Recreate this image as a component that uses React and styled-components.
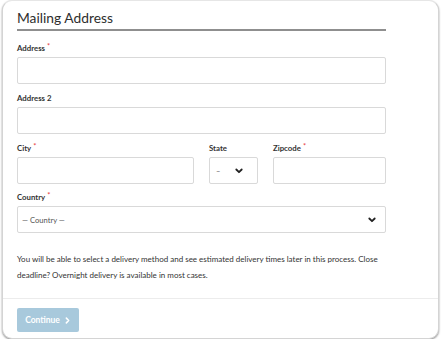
import React from "react";
import styled, { createGlobalStyle } from "styled-components";

const GlobalStyle = createGlobalStyle`
  html, body {
    margin: 0;
    padding: 0;
    background: #ffffff;
  }
  body {
    font-family: Lato, "Open Sans", "Liberation Sans", sans-serif;
    color: #333333;
  }
`;

const Chevron = ({ dir = "down", color = "#222", size = 8 }) => (
  <svg width={size} height={size} viewBox="0 0 8 8">
    <path
      d={dir === "down" ? "M1.3 2.5 L4 5.2 L6.7 2.5" : "M2.7 1.3 L5.3 4 L2.7 6.7"}
      fill="none"
      stroke={color}
      strokeWidth="1.8"
      strokeLinecap="round"
      strokeLinejoin="round"
    />
  </svg>
);

const App = () => {
  return (
    <>
      <GlobalStyle />
      <StyledCard>
        <StyledBody>
          <StyledTitle>Mailing Address</StyledTitle>

          <StyledField top="10px">
            <StyledLabel>
              Address<Req>*</Req>
            </StyledLabel>
            <StyledInput />
          </StyledField>

          <StyledField>
            <StyledLabel>Address 2</StyledLabel>
            <StyledInput />
          </StyledField>

          <StyledRow>
            <StyledField width="177px">
              <StyledLabel>
                City<Req>*</Req>
              </StyledLabel>
              <StyledInput />
            </StyledField>
            <StyledField width="49px">
              <StyledLabel>State</StyledLabel>
              <StyledSelect pad="0 14px 0 6px">
                <span>–</span>
                <Chevron />
              </StyledSelect>
            </StyledField>
            <StyledField width="113px">
              <StyledLabel>
                Zipcode<Req>*</Req>
              </StyledLabel>
              <StyledInput />
            </StyledField>
          </StyledRow>

          <StyledField top="8px">
            <StyledLabel>
              Country<Req>*</Req>
            </StyledLabel>
            <StyledSelect pad="0 9px 0 4px">
              <span>— Country —</span>
              <Chevron />
            </StyledSelect>
          </StyledField>

          <StyledNote>
            You will be able to select a delivery method and see estimated
            delivery times later in this process. Close deadline? Overnight
            delivery is available in most cases.
          </StyledNote>
        </StyledBody>

        <StyledFooter>
          <StyledButton>
            Continue <Chevron dir="right" color="#fff" size={7} />
          </StyledButton>
        </StyledFooter>
      </StyledCard>
    </>
  );
};

const StyledCard = styled.div`
  box-sizing: border-box;
  margin: 0 2px;
  width: 437px;
  height: 339px;
  border: 1px solid #d4d4d4;
  border-top-color: #e6e6e6;
  border-radius: 10px;
  box-shadow: 0 1px 2px rgba(0, 0, 0, 0.45);
  background: #fff;
  display: flex;
  flex-direction: column;
  overflow: hidden;
`;

const StyledBody = styled.div`
  width: 369px;
  padding: 8px 0 0 14px;
  display: flex;
  flex-direction: column;
`;

const StyledTitle = styled.h2`
  margin: 0 0 2px;
  font-size: 13.8px;
  font-weight: 400;
  color: #2e2e2e;
  line-height: 18px;
  padding-bottom: 2px;
  border-bottom: 2px solid #8f8f8f;
`;

const StyledField = styled.div`
  display: flex;
  flex-direction: column;
  width: ${(p) => p.width || "100%"};
  margin-top: ${(p) => p.top || "9px"};
`;

const StyledLabel = styled.label`
  font-size: 7.8px;
  font-weight: 700;
  color: #333;
  line-height: 10px;
  height: 10px;
  margin-bottom: 4px;
  white-space: nowrap;
`;

const Req = styled.span`
  color: #e8413f;
  margin-left: 2px;
  font-size: 7.5px;
  line-height: 0;
  vertical-align: 2px;
  font-weight: 400;
`;

const StyledInput = styled.div`
  box-sizing: border-box;
  height: 27px;
  border: 1px solid #d9d9d9;
  border-radius: 2px;
  background: #fff;
`;

const StyledSelect = styled(StyledInput)`
  display: flex;
  align-items: center;
  justify-content: space-between;
  padding: ${(p) => p.pad};
  font-size: 7.6px;
  color: #555;
`;

const StyledRow = styled.div`
  display: flex;
  gap: 15px;
`;

const StyledNote = styled.p`
  margin: 18px 0 0;
  font-size: 8px;
  line-height: 16px;
  color: #333;
`;

const StyledFooter = styled.div`
  margin-top: 15px;
  border-top: 1px solid #ececec;
  padding: 9px 14px;
`;

const StyledButton = styled.div`
  width: 62px;
  height: 24px;
  box-sizing: border-box;
  background: #a8c9dc;
  border-radius: 2px;
  color: #fff;
  font-size: 8.5px;
  font-weight: 700;
  display: flex;
  align-items: center;
  justify-content: center;
  gap: 4px;
`;

export default App;
